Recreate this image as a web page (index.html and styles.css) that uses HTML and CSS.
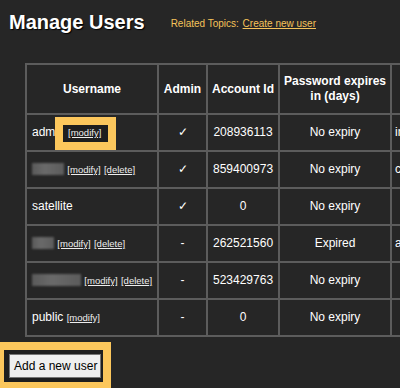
FILE: index.html
```html
<!DOCTYPE html>
<html lang="en">
<head>
    <meta charset="UTF-8">
    <title>Manage Users</title>
    <link rel="stylesheet" href="styles.css">
</head>
<body>
<div class="head">
    <h1>Manage Users</h1>
    <div class="related">Related Topics: <a href="#">Create new user</a></div>
</div>
<table class="users">
    <tr>
        <th class="c-user">Username</th>
        <th class="c-admin">Admin</th>
        <th class="c-id">Account Id</th>
        <th class="c-exp">Password expires in (days)</th>
        <th class="c-desc">Description</th>
    </tr>
    <tr>
        <td class="name mark-cell">admin <a href="#" class="act">[modify]</a><span class="mark"></span></td>
        <td>&#10003;</td>
        <td>208936113</td>
        <td>No expiry</td>
        <td class="desc">internal</td>
    </tr>
    <tr>
        <td class="name"><span class="hidden w32"></span> <a href="#" class="act">[modify]</a> <a href="#" class="act">[delete]</a></td>
        <td>&#10003;</td>
        <td>859400973</td>
        <td>No expiry</td>
        <td class="desc">console</td>
    </tr>
    <tr>
        <td class="name">satellite</td>
        <td>&#10003;</td>
        <td>0</td>
        <td>No expiry</td>
        <td class="desc"></td>
    </tr>
    <tr>
        <td class="name"><span class="hidden w20"></span> <a href="#" class="act">[modify]</a> <a href="#" class="act">[delete]</a></td>
        <td>-</td>
        <td>262521560</td>
        <td>Expired</td>
        <td class="desc">archived</td>
    </tr>
    <tr>
        <td class="name"><span class="hidden w48"></span> <a href="#" class="act">[modify]</a> <a href="#" class="act">[delete]</a></td>
        <td>-</td>
        <td>523429763</td>
        <td>No expiry</td>
        <td class="desc"></td>
    </tr>
    <tr>
        <td class="name">public <a href="#" class="act">[modify]</a></td>
        <td>-</td>
        <td>0</td>
        <td>No expiry</td>
        <td class="desc"></td>
    </tr>
</table>
<div class="actions">
    <span class="mark big"></span>
    <button type="button">Add a new user</button>
</div>
</body>
</html>
```

FILE: styles.css
```css
html, body{
    overflow: hidden;
}
body{
    margin: 0;
    padding: 11px 9px;
    background: #262626;
    color: #fff;
    font-family: "Liberation Sans", Arial, sans-serif;
    font-size: 12px;
}
/*标题行*/
.head{
    display: flex;
    align-items: center;
    gap: 26px;
}
.head h1{
    margin: 0;
    font-size: 20px;
    line-height: 23px;
    text-shadow: 1px 1px 1px #000;
}
.related{
    font-size: 10px;
    color: #f5c35a;
    padding-top: 1px;
}
.related a{
    color: #f5c35a;
    margin-left: 1px;
}
/*用户表格*/
.users{
    margin: 29px 0 0 16px;
    width: 567px;
    table-layout: fixed;
    border-collapse: separate;
    border-spacing: 0;
    border-top: 2px solid #5c5c5c;
    border-left: 2px solid #5c5c5c;
    white-space: nowrap;
}
.users th, .users td{
    box-sizing: border-box;
    border-right: 2px solid #5c5c5c;
    border-bottom: 2px solid #5c5c5c;
    line-height: 15px;
    text-align: center;
}
.users th{
    padding: 9px 3px;
    white-space: normal;
}
.users td{
    padding: 10px 5px;
}
.c-user{ width: 132px; }
.c-admin{ width: 49px; }
.c-id{ width: 72px; }
.c-exp{ width: 112px; }
.c-desc{ width: 200px; }
.users td.name, .users td.desc{
    text-align: left;
}
.users td.desc{
    padding-left: 3px;
}
.act{
    color: #ededed;
    font-size: 9.5px;
    position: relative;
    z-index: 2;
}
/*打码的用户名*/
.hidden{
    display: inline-block;
    height: 12px;
    vertical-align: -2px;
    background: linear-gradient(90deg, #5a5a5a, #6a6a6a 40%, #5c5c5c);
    filter: blur(0.8px);
}
.w20{ width: 22px; }
.w32{ width: 32px; }
.w48{ width: 49px; }
/*黄色标注框*/
.mark-cell{
    position: relative;
}
.mark{
    position: absolute;
    left: 28px;
    top: 2px;
    width: 61px;
    height: 33px;
    box-sizing: border-box;
    border: 8px solid #fcc75c;
    background: #1e1e1e;
    z-index: 1;
}
.actions{
    position: relative;
    margin-top: 17px;
}
.mark.big{
    left: -13px;
    top: -12px;
    width: 115px;
    height: 48px;
    background: #1f1f1f;
    z-index: 0;
}
.actions button{
    position: relative;
    z-index: 1;
    font-family: "Liberation Sans", Arial, sans-serif;
    font-size: 12px;
    line-height: 14px;
    padding: 4px 3px 4px 4px;
    white-space: nowrap;
    color: #000;
    background: #efefef;
    border: 1px solid #767676;
}
```
